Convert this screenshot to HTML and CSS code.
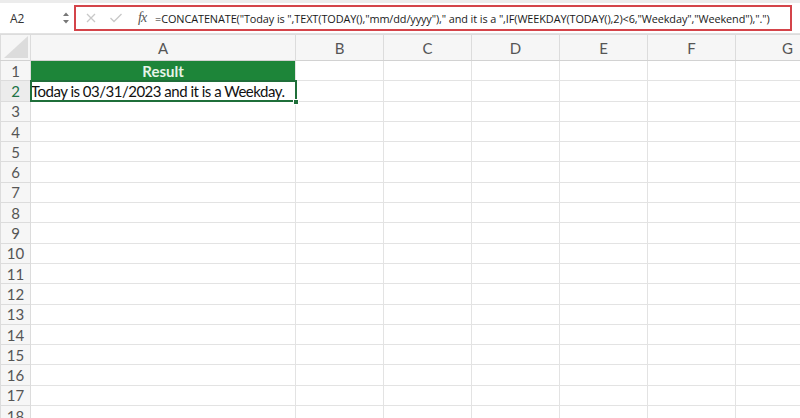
FILE: index.html
```html
<!DOCTYPE html>
<html lang="en">
<head>
  <meta charset="UTF-8">
  <title>Weekday formula</title>
  <link rel="stylesheet" href="styles.css">
</head>
<body>
  <!-- formula bar -->
  <div class="formula-bar">
    <div class="name-box">
      <span class="cell-ref">A2</span>
      <svg class="stepper" width="8" height="14" viewBox="0 0 8 14">
        <path d="M1 5 L4 1.5 L7 5 Z" fill="#777"/>
        <path d="M1 9 L4 12.5 L7 9 Z" fill="#777"/>
      </svg>
    </div>
    <div class="formula-box">
      <svg class="icon" width="12" height="12" viewBox="0 0 12 12">
        <path d="M2 2 L10 10 M10 2 L2 10" stroke="#c8c8c8" stroke-width="1.3" fill="none"/>
      </svg>
      <svg class="icon" width="14" height="12" viewBox="0 0 14 12">
        <path d="M1.5 6 L5 9.5 L12.5 2" stroke="#c8c8c8" stroke-width="1.3" fill="none"/>
      </svg>
      <span class="fx"><i>f</i><i>x</i></span>
      <span class="formula">=CONCATENATE("Today is ",TEXT(TODAY(),"mm/dd/yyyy")," and it is a ",IF(WEEKDAY(TODAY(),2)&lt;6,"Weekday","Weekend"),".")</span>
    </div>
  </div>

  <!-- sheet -->
  <table class="sheet">
    <colgroup>
      <col class="col-head">
      <col class="col-a">
      <col class="col-std">
      <col class="col-std">
      <col class="col-std">
      <col class="col-std">
      <col class="col-std">
      <col>
    </colgroup>
    <tr class="head-row">
      <th class="corner"><span class="corner-tri"></span></th>
      <th>A</th><th>B</th><th>C</th><th>D</th><th>E</th><th>F</th><th>G</th>
    </tr>
    <tr>
      <th>1</th>
      <td class="title">Result</td><td></td><td></td><td></td><td></td><td></td><td></td>
    </tr>
    <tr>
      <th class="active-row">2</th>
      <td class="selected">Today is 03/31/2023 and it is a Weekday.<span class="handle"></span></td><td></td><td></td><td></td><td></td><td></td><td></td>
    </tr>
    <tr><th>3</th><td></td><td></td><td></td><td></td><td></td><td></td><td></td></tr>
    <tr><th>4</th><td></td><td></td><td></td><td></td><td></td><td></td><td></td></tr>
    <tr><th>5</th><td></td><td></td><td></td><td></td><td></td><td></td><td></td></tr>
    <tr><th>6</th><td></td><td></td><td></td><td></td><td></td><td></td><td></td></tr>
    <tr><th>7</th><td></td><td></td><td></td><td></td><td></td><td></td><td></td></tr>
    <tr><th>8</th><td></td><td></td><td></td><td></td><td></td><td></td><td></td></tr>
    <tr><th>9</th><td></td><td></td><td></td><td></td><td></td><td></td><td></td></tr>
    <tr><th>10</th><td></td><td></td><td></td><td></td><td></td><td></td><td></td></tr>
    <tr><th>11</th><td></td><td></td><td></td><td></td><td></td><td></td><td></td></tr>
    <tr><th>12</th><td></td><td></td><td></td><td></td><td></td><td></td><td></td></tr>
    <tr><th>13</th><td></td><td></td><td></td><td></td><td></td><td></td><td></td></tr>
    <tr><th>14</th><td></td><td></td><td></td><td></td><td></td><td></td><td></td></tr>
    <tr><th>15</th><td></td><td></td><td></td><td></td><td></td><td></td><td></td></tr>
    <tr><th>16</th><td></td><td></td><td></td><td></td><td></td><td></td><td></td></tr>
    <tr><th>17</th><td></td><td></td><td></td><td></td><td></td><td></td><td></td></tr>
    <tr><th>18</th><td></td><td></td><td></td><td></td><td></td><td></td><td></td></tr>
  </table>
</body>
</html>
```

FILE: styles.css
```css
* {
  box-sizing: border-box;
}

body, html {
  margin: 0;
  padding: 0;
  height: 100%;
  overflow: hidden;
}

body {
  background: #fff;
  font-family: 'Lato', 'Liberation Sans', sans-serif;
  color: #222;
}

/* formula bar */
.formula-bar {
  display: flex;
  align-items: center;
  height: 34px;
  border-top: 3px solid #ececec;
  border-bottom: 1px solid #e2e2e2;
  padding: 0 8px 0 0;
}

.name-box {
  display: flex;
  align-items: center;
  justify-content: space-between;
  width: 74px;
  padding: 0 4px 0 10px;
  font-family: 'Open Sans', sans-serif;
  font-size: 12px;
  color: #333;
}

.formula-box {
  flex: 1;
  display: flex;
  align-items: center;
  height: 26px;
  border: 2px solid #d4444a;
  padding-left: 9px;
}

.formula-box .icon {
  margin-right: 12px;
}

.fx {
  font-family: 'Liberation Serif', serif;
  font-size: 14px;
  color: #555;
  margin: 0 9px 0 3px;
  letter-spacing: -1px;
}

.formula {
  font-family: 'Open Sans', sans-serif;
  font-size: 10.9px;
  color: #1a1a1a;
  white-space: nowrap;
  letter-spacing: -0.1px;
}

/* sheet grid */
.sheet {
  border-collapse: collapse;
  table-layout: fixed;
  width: 840px;
}

.col-head { width: 30px; }
.col-a { width: 265px; }
.col-std { width: 88px; }

.sheet th,
.sheet td {
  height: 20.3px;
  padding: 0;
  border: 1px solid #e3e3e3;
  white-space: nowrap;
  overflow: visible;
}

.sheet th {
  font-weight: normal;
  font-size: 15px;
  color: #555;
  background: #f6f6f6;
  text-align: center;
  border-color: #dcdcdc;
}

.sheet th.active-row {
  color: #217346;
  background: #ececec;
}

.head-row th {
  height: 26px;
  font-size: 15px;
  border-bottom-color: #d2d2d2;
}

.corner {
  position: relative;
}

.corner-tri {
  position: absolute;
  right: 2px;
  bottom: 2px;
  width: 0;
  height: 0;
  border-left: 24px solid transparent;
  border-bottom: 22px solid #dcdcdc;
}

.title {
  background: #1d8539;
  color: #e6f4e8;
  font-weight: bold;
  font-size: 15px;
  text-align: center;
  border-color: #1d8539;
}

.selected {
  position: relative;
  font-size: 15px;
  letter-spacing: -0.5px;
  color: #111;
  padding-left: 5px;
  outline: 2px solid #1f6f3a;
  outline-offset: -1px;
}

.handle {
  position: absolute;
  right: -4px;
  bottom: -4px;
  width: 6px;
  height: 6px;
  background: #1f6f3a;
  border: 1px solid #fff;
}
```
